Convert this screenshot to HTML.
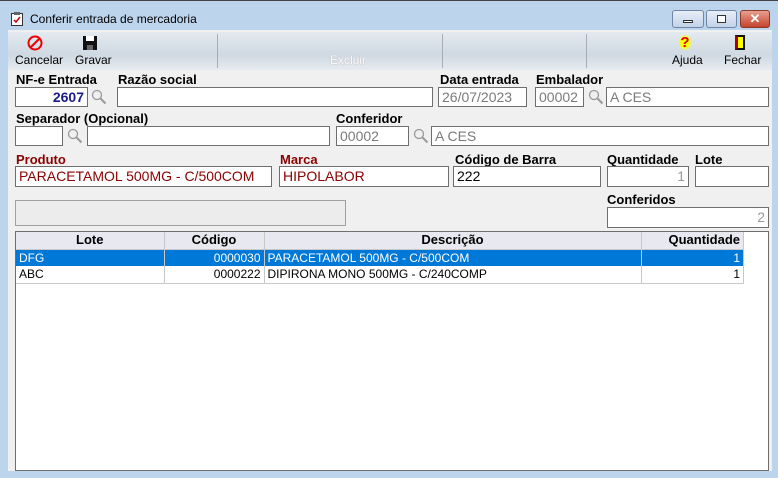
<!DOCTYPE html><html><head><style>
*{margin:0;padding:0;box-sizing:border-box}
body{width:778px;height:478px;background:#bcd4ec;font-family:"Liberation Sans",sans-serif;position:relative;overflow:hidden}
.a{position:absolute}
.c{left:8px;top:30px;width:764px;height:441px;background:#f0f0f0}
.tb{left:8px;top:32px;width:764px;height:38px;background:linear-gradient(180deg,#e4eaf0,#cfd9e2 60%,#e6ebef)}
.l{position:absolute;font-size:13px;font-weight:bold;color:#000;white-space:nowrap}
.r{color:#8b0000}
.i{position:absolute;background:#fff;border:1px solid #6e6e6e;font-size:14px;line-height:18px;padding:0 3px;white-space:nowrap;overflow:hidden}
.g{color:#7a7a7a}
.m{position:absolute;width:16px;height:16px}
.btn{position:absolute;font-size:12px;text-align:center}
table{border-collapse:collapse;font-size:12px}
td{height:17px;line-height:16px;padding:0 3px;border-right:1px solid #c8c8c8;white-space:nowrap}
</style></head><body>
<div class="a" style="left:0;top:0;width:778px;height:1px;background:#444"></div>
<svg class="a" style="left:10px;top:11px" width="14" height="16"><rect x="1.5" y="2.5" width="11" height="12" fill="#fff" stroke="#333"/><rect x="4" y="1" width="6" height="3" fill="#666"/><path d="M4 9l2 2 4-5" stroke="#c00" stroke-width="1.5" fill="none"/></svg>
<div class="a" style="left:30px;top:12px;font-size:12px">Conferir entrada de mercadoria</div>
<div class="a" style="left:672px;top:10px;width:32px;height:18px;border:1px solid #6f86a8;border-radius:3px;background:linear-gradient(#e8eef7,#c3d3e8)"><div class="a" style="left:10px;top:9px;width:10px;height:3px;background:#fff;border:1px solid #333"></div></div>
<div class="a" style="left:706px;top:10px;width:31px;height:18px;border:1px solid #6f86a8;border-radius:3px;background:linear-gradient(#e8eef7,#c3d3e8)"><div class="a" style="left:10px;top:4px;width:9px;height:8px;border:1px solid #333;background:#fff"></div></div>
<div class="a" style="left:740px;top:10px;width:30px;height:18px;border:1px solid #8b3a2a;border-radius:3px;background:linear-gradient(#e8a090,#c4432c);color:#fff;font-weight:bold;font-size:13px;text-align:center;line-height:16px">✕</div>
<div class="a c"></div>
<div class="a tb"></div>
<div class="a" style="left:217px;top:34px;width:1px;height:34px;background:#aab"></div>
<div class="a" style="left:442px;top:34px;width:1px;height:34px;background:#aab"></div>
<div class="a" style="left:586px;top:34px;width:1px;height:34px;background:#aab"></div>
<svg class="a" style="left:27px;top:35px" width="16" height="16"><circle cx="8" cy="8" r="6.5" fill="none" stroke="#e00" stroke-width="2"/><path d="M3.5 12.5l9-9" stroke="#e00" stroke-width="2"/></svg>
<div class="btn" style="left:15px;top:53px">Cancelar</div>
<svg class="a" style="left:82px;top:35px" width="16" height="16"><rect x="1" y="1" width="14" height="14" fill="#111"/><rect x="4" y="1" width="8" height="5" fill="#fff"/><rect x="5" y="10" width="6" height="5" fill="#666"/></svg>
<div class="btn" style="left:75px;top:53px">Gravar</div>
<div class="btn" style="left:330px;top:53px;color:#fff;text-shadow:0 0 1px #999">Excluir</div>
<div class="a" style="left:678px;top:34px;font-size:15px;font-weight:bold;color:#d00;background:radial-gradient(#ff0 40%,transparent 70%);width:14px;text-align:center">?</div>
<div class="btn" style="left:672px;top:53px">Ajuda</div>
<div class="a" style="left:735px;top:35px;width:10px;height:15px;background:#ff0;border:2px solid #111;border-left:3px solid #a00"></div>
<div class="btn" style="left:724px;top:53px">Fechar</div>

<div class="l" style="left:16px;top:72px">NF-e Entrada</div>
<div class="l" style="left:118px;top:72px">Razão social</div>
<div class="l" style="left:440px;top:72px">Data entrada</div>
<div class="l" style="left:536px;top:72px">Embalador</div>
<div class="i" style="left:15px;top:87px;width:73px;height:20px;text-align:right;color:#1a1a8c;font-weight:bold">2607</div>
<div class="i" style="left:117px;top:87px;width:316px;height:20px"></div>
<div class="i g" style="left:438px;top:87px;width:89px;height:20px">26/07/2023</div>
<div class="i g" style="left:535px;top:87px;width:49px;height:20px">00002</div>
<div class="i g" style="left:606px;top:87px;width:163px;height:20px">A CES</div>

<div class="l" style="left:16px;top:111px">Separador (Opcional)</div>
<div class="l" style="left:336px;top:111px">Conferidor</div>
<div class="i" style="left:15px;top:126px;width:48px;height:20px"></div>
<div class="i" style="left:87px;top:126px;width:243px;height:20px"></div>
<div class="i g" style="left:336px;top:126px;width:73px;height:20px">00002</div>
<div class="i g" style="left:431px;top:126px;width:338px;height:20px">A CES</div>

<div class="l r" style="left:16px;top:152px">Produto</div>
<div class="l r" style="left:280px;top:152px">Marca</div>
<div class="l" style="left:455px;top:152px">Código de Barra</div>
<div class="l" style="left:607px;top:152px">Quantidade</div>
<div class="l" style="left:695px;top:152px">Lote</div>
<div class="i" style="left:15px;top:166px;width:257px;height:21px;color:#8b0000;line-height:19px">PARACETAMOL 500MG - C/500COM</div>
<div class="i" style="left:279px;top:166px;width:170px;height:21px;color:#8b0000;line-height:19px">HIPOLABOR</div>
<div class="i" style="left:453px;top:166px;width:148px;height:21px;line-height:19px">222</div>
<div class="i g" style="left:607px;top:166px;width:82px;height:21px;text-align:right;color:#999">1</div>
<div class="i" style="left:695px;top:166px;width:74px;height:21px"></div>
<div class="a" style="left:15px;top:200px;width:331px;height:26px;border:1px solid #a0a0a0;background:#ececec"></div>
<div class="l" style="left:607px;top:192px">Conferidos</div>
<div class="i g" style="left:607px;top:207px;width:162px;height:21px;text-align:right;color:#999">2</div>

<svg class="m" style="left:91px;top:89px"><circle cx="6" cy="6" r="4.5" fill="none" stroke="#999" stroke-width="1.3"/><path d="M9.5 9.5l5 5" stroke="#999" stroke-width="2"/></svg>
<svg class="m" style="left:588px;top:89px"><circle cx="6" cy="6" r="4.5" fill="none" stroke="#999" stroke-width="1.3"/><path d="M9.5 9.5l5 5" stroke="#999" stroke-width="2"/></svg>
<svg class="m" style="left:67px;top:128px"><circle cx="6" cy="6" r="4.5" fill="none" stroke="#999" stroke-width="1.3"/><path d="M9.5 9.5l5 5" stroke="#999" stroke-width="2"/></svg>
<svg class="m" style="left:413px;top:128px"><circle cx="6" cy="6" r="4.5" fill="none" stroke="#999" stroke-width="1.3"/><path d="M9.5 9.5l5 5" stroke="#999" stroke-width="2"/></svg>

<div class="a" style="left:15px;top:231px;width:754px;height:240px;background:#fff;border:1px solid #6e6e6e">
<table style="width:728px">
<tr style="background:#e8e8f0;font-weight:bold;font-size:13px"><td style="width:148px;text-align:center;border-bottom:1px solid #c8c8c8">Lote</td><td style="width:100px;text-align:center;border-bottom:1px solid #c8c8c8">Código</td><td style="width:377px;text-align:center;border-bottom:1px solid #c8c8c8">Descrição</td><td style="text-align:right;border-bottom:1px solid #c8c8c8">Quantidade</td></tr>
<tr style="background:#0078d7;color:#fff"><td>DFG</td><td style="text-align:right">0000030</td><td>PARACETAMOL 500MG - C/500COM</td><td style="text-align:right">1</td></tr>
<tr><td style="border-bottom:1px solid #c8c8c8">ABC</td><td style="text-align:right;border-bottom:1px solid #c8c8c8">0000222</td><td style="border-bottom:1px solid #c8c8c8">DIPIRONA MONO 500MG - C/240COMP</td><td style="text-align:right;border-bottom:1px solid #c8c8c8">1</td></tr>
</table></div>
</body></html>
